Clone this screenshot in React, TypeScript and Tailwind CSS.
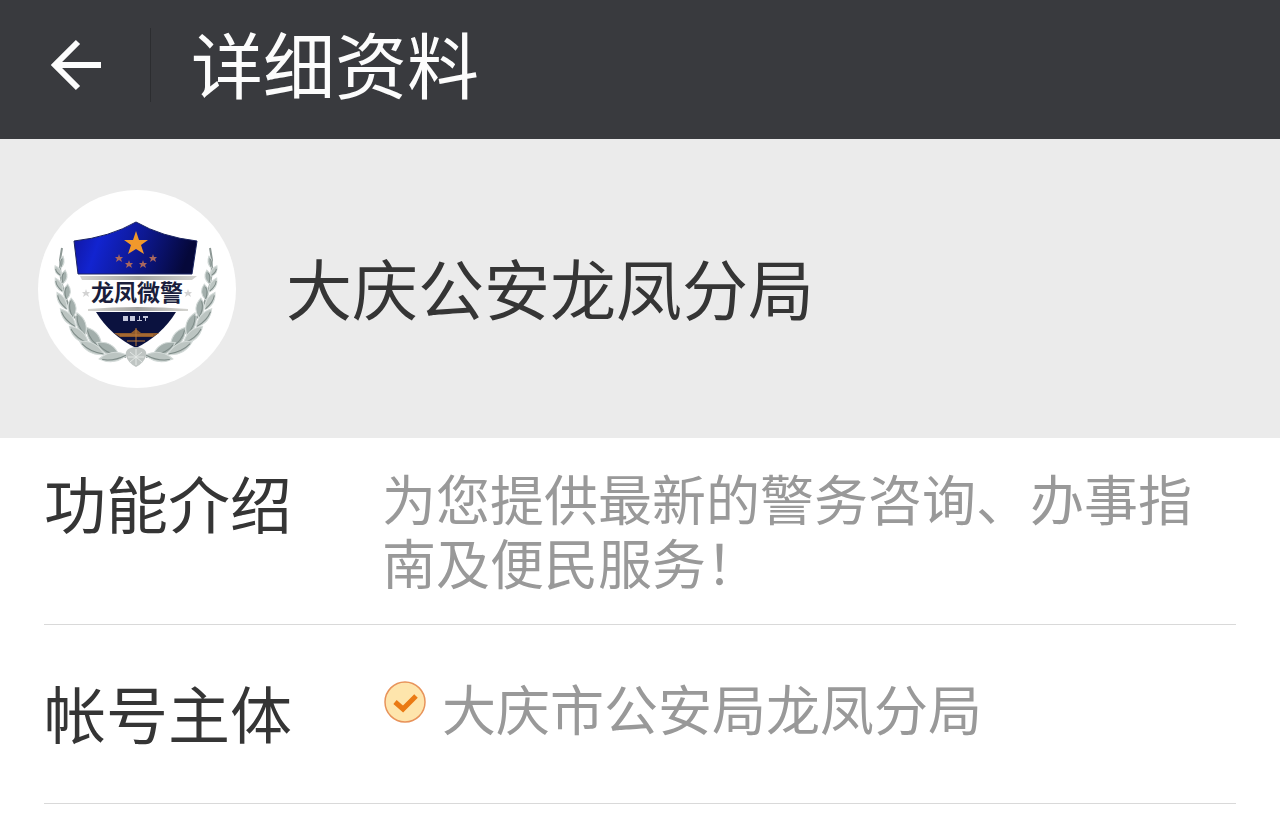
import type { ReactNode } from 'react'

// Leaves of the left branch: centre, angle, half length and half width
const leaves = [
  { x: 24, y: 72, a: 100, l: 6, w: 4 },
  { x: 20, y: 81, a: 60, l: 6, w: 5 },
  { x: 26, y: 87, a: 100, l: 7, w: 6 },
  { x: 21, y: 95, a: 62, l: 8, w: 6 },
  { x: 29, y: 102, a: 95, l: 8, w: 7 },
  { x: 24, y: 111, a: 60, l: 10, w: 7 },
  { x: 34, y: 118, a: 85, l: 10, w: 8 },
  { x: 30, y: 128, a: 50, l: 12, w: 8 },
  { x: 43, y: 134, a: 70, l: 12, w: 9 },
  { x: 41, y: 145, a: 42, l: 13, w: 9 },
  { x: 56, y: 148, a: 55, l: 13, w: 10 },
  { x: 54, y: 158, a: 28, l: 14, w: 9 },
  { x: 70, y: 159, a: 30, l: 13, w: 10 },
  { x: 75, y: 167, a: -8, l: 14, w: 9 },
]

const smallStars = [
  [81, 68],
  [91, 74],
  [105, 74],
  [115, 68],
]

function Branch() {
  return (
    <g>
      <path d="M24 58L22 70C21 110 42 152 88 167" fill="none" stroke="#8d9895" strokeWidth="2" />
      {leaves.map((leaf, i) => (
        <g key={i} transform={`translate(${leaf.x} ${leaf.y}) rotate(${leaf.a})`}>
          <path
            d={`M${-leaf.l} 0Q0 ${-leaf.w} ${leaf.l} 0Q0 ${leaf.w} ${-leaf.l} 0Z`}
            fill={i % 2 ? '#bcc5c2' : '#a3afac'}
            stroke="#d3dad8"
            strokeWidth="1"
          />
          <path d={`M${-leaf.l + 3} 1Q0 ${leaf.w / 2} ${leaf.l - 1} 0`} fill="none" stroke="#7e8b88" strokeWidth="1" />
        </g>
      ))}
    </g>
  )
}

function Emblem() {
  return (
    <svg viewBox="0 0 198 198" className="size-[198px] shrink-0 rounded-full bg-white" role="img" aria-label="龙凤微警">
      <defs>
        <linearGradient id="shield" x1="0" x2="1" y1="0" y2="0.15">
          <stop offset="0" stopColor="#10149c" />
          <stop offset="0.25" stopColor="#1224d0" />
          <stop offset="0.6" stopColor="#0d1890" />
          <stop offset="1" stopColor="#05083a" />
        </linearGradient>
        <linearGradient id="bar" x1="0" x2="1" y1="0" y2="0">
          <stop offset="0" stopColor="#d4d4d0" />
          <stop offset="0.5" stopColor="#a3a4a0" />
          <stop offset="1" stopColor="#d4d4d0" />
        </linearGradient>
      </defs>

      <Branch />
      <g transform="translate(196 0) scale(-1 1)">
        <Branch />
      </g>

      <path d="M36 51Q72 47 98 32Q124 47 159 51L154 84H40Z" fill="url(#shield)" stroke="#1c2560" strokeWidth="1" />
      <path d="M98 41L101 50H110L103 55L106 64L98 59L90 64L93 55L86 50H95Z" fill="#f0982c" />
      {smallStars.map(([x, y]) => (
        <path
          key={x}
          d="M0 -4L1 -1H4L2 1L3 4L0 2L-3 4L-2 1L-4 -1H-1Z"
          transform={`translate(${x} ${y})`}
          fill="#a8675e"
        />
      ))}

      <path d="M42 86H159L154 90H44Z" fill="url(#bar)" />
      <path d="M50 119Q99 115 150 119V121H50Z" fill="url(#bar)" />
      <path d="M48 99L49 102H52L50 104L51 107L48 105L45 107L46 104L44 102H47Z" fill="#d3d3d3" />
      <path d="M150 99L151 102H154L152 104L153 107L150 105L147 107L148 104L146 102H149Z" fill="#d3d3d3" />
      <text
        x="99"
        y="111"
        textAnchor="middle"
        fill="#1a1e3c"
        className="font-['Noto_Sans_CJK_SC',sans-serif] text-[23px] font-bold"
      >
        龙凤微警
      </text>

      <path d="M58 122H138Q124 145 98 158Q72 145 58 122Z" fill="#0b123f" />
      <path
        d="M85 126H90V131H85ZM92 126H97V131H92ZM99 130H104V131H99ZM101 126H102V131H101ZM105 126H110V128H105ZM107 128H108V131H107Z"
        fill="#c4c8dc"
      />
      <path d="M76 143H93L98 139L103 143H121L115 147H82Z" fill="#8f5a2c" />
      <path d="M82 145H115M98 138V156M89 151H107" fill="none" stroke="#b97838" strokeWidth="1" />

      <path d="M98 157Q110 158 108 166Q106 173 98 177Q90 173 88 166Q86 158 98 157Z" fill="#bfc5c3" />
      <path d="M92 162L104 172M104 162L92 172M98 159V175M90 167H106" fill="none" stroke="#e3e7e5" strokeWidth="1" />
    </svg>
  )
}

function VerifiedIcon() {
  return (
    <svg viewBox="0 0 42 42" className="mt-[5px] ml-0.5 size-[42px] shrink-0" aria-hidden="true">
      <circle cx="21" cy="21" r="20" fill="#fee5ac" stroke="#e8935a" strokeWidth="1.5" />
      <path d="M11 21L19 28L32 15" fill="none" stroke="#ea7a14" strokeWidth="5" />
    </svg>
  )
}

function InfoRow({ label, className, children }: { label: string; className: string; children: ReactNode }) {
  return (
    <div className={`flex border-b border-[#d9d9d9] ${className}`}>
      <dt className="w-[338px] shrink-0 text-[62px] leading-[72px] text-[#353535]">{label}</dt>
      <dd className="min-w-0 flex-1 text-[54px] leading-[64px] text-[#999999]">{children}</dd>
    </div>
  )
}

export default function App() {
  return (
    <div className="min-h-screen bg-white font-['Noto_Sans_CJK_SC',sans-serif]" lang="zh-CN">
      <header className="flex items-center bg-[#393a3e] pt-[25px] pb-[34px]">
        <button type="button" aria-label="返回" className="flex w-[150px] justify-start pl-[50px]">
          <svg viewBox="0 0 52 52" className="size-[52px]" fill="none" stroke="#fcfcfc" strokeWidth="6">
            <path d="M51 26H5M28 3L5 26L28 49" />
          </svg>
        </button>
        <div className="h-[74px] w-px bg-[#2c2d30]" />
        <h1 className="pb-1.5 pl-10 text-[72px] leading-[74px] text-[#fcfcfc]">详细资料</h1>
      </header>

      <section className="flex items-center gap-[50px] bg-[#ebebeb] pt-[51px] pr-11 pb-[50px] pl-[38px]">
        <Emblem />
        <h2 className="pb-1.5 text-[66px] leading-[74px] text-[#353535]">大庆公安龙凤分局</h2>
      </section>

      <dl className="px-11">
        <InfoRow label="功能介绍" className="pt-7 pb-[30px]">
          为您提供最新的警务咨询、办事指南及便民服务！
        </InfoRow>
        <InfoRow label="帐号主体" className="pt-[51px] pb-[55px]">
          <span className="flex items-start gap-4">
            <VerifiedIcon />
            大庆市公安局龙凤分局
          </span>
        </InfoRow>
      </dl>
    </div>
  )
}
